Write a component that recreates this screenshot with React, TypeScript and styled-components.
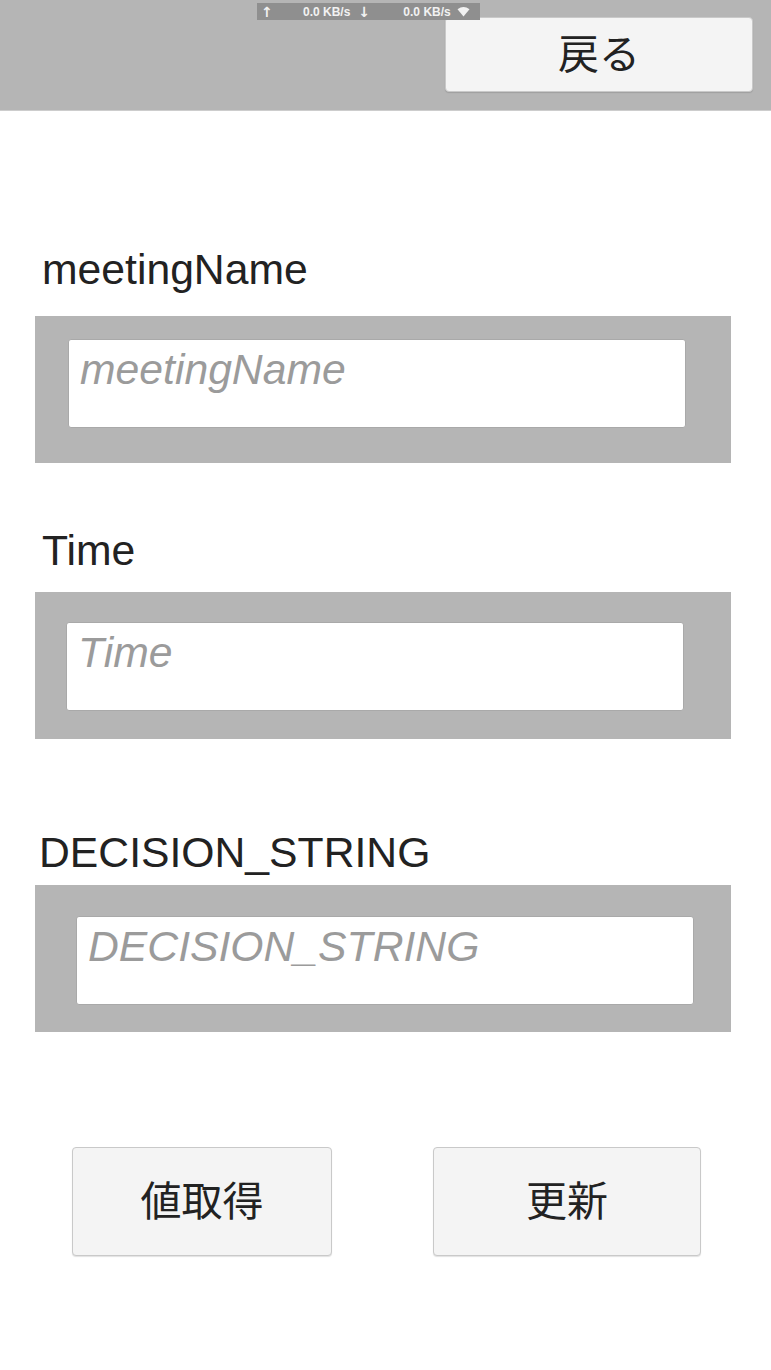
import styled, { createGlobalStyle } from 'styled-components'

const GlobalStyle = createGlobalStyle`
  html, body {
    margin: 0;
    padding: 0;
    background: #ffffff;
  }
  body {
    font-family: "Liberation Sans", Arial, "Noto Sans CJK JP", sans-serif;
    color: #222222;
  }
`

type FieldProps = {
	name: string
	gapAbove: number
	labelIndent: number
	labelGap: number
	insetTop: number
	insetLeft: number
}

const fields: FieldProps[] = [
	{ name: 'meetingName', gapAbove: 137, labelIndent: 42, labelGap: 26, insetTop: 23, insetLeft: 33 },
	{ name: 'Time', gapAbove: 66, labelIndent: 42, labelGap: 21, insetTop: 30, insetLeft: 31 },
	{ name: 'DECISION_STRING', gapAbove: 92, labelIndent: 39, labelGap: 12, insetTop: 31, insetLeft: 41 },
]

function WifiIcon() {
	return (
		<svg width="13" height="11" viewBox="0 0 13 11">
			<path d="M0.5 3.2 Q6.5 -1.2 12.5 3.2 L6.5 10.5 Z" fill="#f2f2f2" />
		</svg>
	)
}

function App() {
	return (
		<Page>
			<GlobalStyle />
			<Header>
				<BackButton type="button">戻る</BackButton>
			</Header>
			<StatusBar>
				<Arrow>↑</Arrow>
				<Rate>0.0 KB/s</Rate>
				<Arrow>↓</Arrow>
				<Rate wide>0.0 KB/s</Rate>
				<WifiIcon />
			</StatusBar>
			{fields.map(field => (
				<Field key={field.name} $gapAbove={field.gapAbove}>
					<Label $indent={field.labelIndent} $gap={field.labelGap}>{field.name}</Label>
					<Panel $top={field.insetTop} $left={field.insetLeft}>
						<TextInput type="text" placeholder={field.name} />
					</Panel>
				</Field>
			))}
			<Actions>
				<ActionButton type="button" $width={260}>値取得</ActionButton>
				<ActionButton type="button" $width={268}>更新</ActionButton>
			</Actions>
		</Page>
	)
}

export default App

const Page = styled.div`
  position: relative;
  width: 771px;
  min-height: 1370px;
  display: flex;
  flex-direction: column;
  background: #ffffff;
`

const Header = styled.header`
  height: 111px;
  box-sizing: border-box;
  background: #b5b5b5;
  border-bottom: 1px solid #cdcdcd;
  display: flex;
  justify-content: flex-end;
  align-items: flex-start;
  padding: 17px 18px 0 0;
`

const Button = styled.button`
  box-sizing: border-box;
  background: #f4f4f4;
  border: 1px solid #c9c9c9;
  border-radius: 4px;
  box-shadow: 0 1px 1px rgba(0, 0, 0, 0.12);
  font-family: "Noto Sans CJK JP", "Liberation Sans", sans-serif;
  font-size: 41px;
  color: #222222;
  display: flex;
  align-items: center;
  justify-content: center;
  padding: 0 0 8px;
  cursor: pointer;
`

const BackButton = styled(Button)`
  width: 308px;
  height: 75px;
`

const StatusBar = styled.div`
  position: absolute;
  top: 3px;
  left: 257px;
  width: 223px;
  height: 17px;
  background: #8f8f8f;
  display: flex;
  align-items: center;
  padding: 0 4px;
  box-sizing: border-box;
  font-family: "Liberation Sans", Arial, sans-serif;
  font-weight: bold;
  font-size: 12px;
  color: #f2f2f2;
`

const Arrow = styled.span`
  font-family: "DejaVu Sans", sans-serif;
  font-weight: bold;
  font-size: 14px;
  width: 12px;
`

const Rate = styled.span<{ wide?: boolean }>`
  margin-left: ${p => (p.wide ? 33 : 30)}px;
  margin-right: ${p => (p.wide ? 6 : 8)}px;
`

const Field = styled.section<{ $gapAbove: number }>`
  margin-top: ${p => p.$gapAbove}px;
  display: flex;
  flex-direction: column;
`

const Label = styled.div<{ $indent: number; $gap: number }>`
  font-size: 42.7px;
  line-height: 42px;
  color: #222222;
  margin-left: ${p => p.$indent}px;
  margin-bottom: ${p => p.$gap}px;
`

const Panel = styled.div<{ $top: number; $left: number }>`
  width: 696px;
  height: 147px;
  margin-left: 35px;
  box-sizing: border-box;
  background: #b5b5b5;
  padding: ${p => p.$top}px 0 0 ${p => p.$left}px;
`

const TextInput = styled.input`
  display: block;
  width: 618px;
  height: 89px;
  box-sizing: border-box;
  margin: 0;
  padding: 8px 11px 37px;
  border: 1px solid #a9a9a9;
  border-radius: 3px;
  background: #ffffff;
  font-family: "Liberation Sans", Arial, sans-serif;
  font-style: italic;
  font-size: 42.7px;
  line-height: 42px;
  color: #222222;
  outline: none;

  &::placeholder {
    color: #9b9b9b;
    font-style: italic;
  }
`

const Actions = styled.div`
  margin-top: 115px;
  padding-left: 72px;
  display: flex;
  gap: 101px;
`

const ActionButton = styled(Button)<{ $width: number }>`
  width: ${p => p.$width}px;
  height: 109px;
`
